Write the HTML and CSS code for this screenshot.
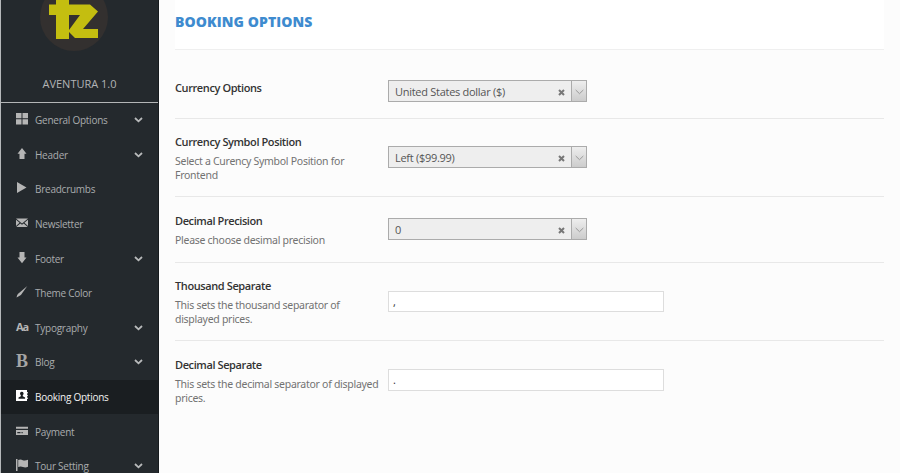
FILE: index.html
```
<!DOCTYPE html>
<html lang="en">
<head>
<meta charset="utf-8">
<title>Booking Options</title>
<link rel="stylesheet" href="styles.css">
</head>
<body>
<div class="app">
  <aside class="sidebar">
    <header class="brand">
      <svg class="logo" width="68" height="52" viewBox="0 0 68 52"><circle cx="34" cy="17" r="34" fill="#33302f"/><path fill-rule="evenodd" d="M9 4.500H16V0H29V4.500H50L58 11.500L43 29H58V38H35L29 32V39H16V15H9ZM29 15V30L40 15Z" fill="#c4be10"/></svg>
      <div class="version">AVENTURA 1.0</div>
    </header>
    <nav class="menu">
      <a class="item"><svg class="icon" viewBox="0 0 12 12"><path d="M0 0h5.500v5.300H0zM6.500 0H12v5.300H6.500zM0 6.300h5.500v5.200H0zM6.500 6.300H12v5.200H6.500z"/></svg><span>General Options</span><svg class="chevron" viewBox="0 0 9 6"><path d="M1 1l3.500 3.300L8 1"/></svg></a>
      <a class="item"><svg class="icon" viewBox="0 0 12 12"><path d="M6 0l4.500 5.800H8.500V11H3.500V5.800H1.500z"/></svg><span>Header</span><svg class="chevron" viewBox="0 0 9 6"><path d="M1 1l3.500 3.300L8 1"/></svg></a>
      <a class="item"><svg class="icon" viewBox="0 0 12 12"><path d="M1 0l9.500 5.500L1 11z"/></svg><span>Breadcrumbs</span></a>
      <a class="item"><svg class="icon" viewBox="0 0 12 12"><path d="M0 1.500h12L6 6.500zM0 2.800l3.600 3L0 9zM12 2.800v6.200L8.400 5.800zM.3 10l4-3.500L6 7.700l1.700-1.200 4 3.500z"/></svg><span>Newsletter</span></a>
      <a class="item"><svg class="icon" viewBox="0 0 12 12"><path d="M6 11.300l4.500-5.800h-2V0h-5v5.500h-2z"/></svg><span>Footer</span><svg class="chevron" viewBox="0 0 9 6"><path d="M1 1l3.500 3.300L8 1"/></svg></a>
      <a class="item"><svg class="icon" viewBox="0 0 12 12"><path d="M11.300 0L4.900 8.900 2.800 10.300 .5 11.500 1.200 9l1.200-1.600z"/></svg><span>Theme Color</span></a>
      <a class="item"><b class="icon glyph-aa">Aa</b><span>Typography</span><svg class="chevron" viewBox="0 0 9 6"><path d="M1 1l3.500 3.300L8 1"/></svg></a>
      <a class="item"><b class="icon glyph-b">B</b><span>Blog</span><svg class="chevron" viewBox="0 0 9 6"><path d="M1 1l3.500 3.300L8 1"/></svg></a>
      <a class="item active"><svg class="icon" viewBox="0 0 12 12"><path fill-rule="evenodd" d="M0 0h11v2h.8v1.500H11v1.300h.8v1.500H11v1.300h.8v1.500H11v2H0zM5.800 1.800a1.800 1.800 0 0 0-1 3.300v1.200L2.500 7.500v1.300h6.600V7.500L6.800 6.300V5.100a1.800 1.800 0 0 0-1-3.300z"/></svg><span>Booking Options</span></a>
      <a class="item"><svg class="icon" viewBox="0 0 12 12"><path fill-rule="evenodd" d="M0 1.700h12v2H0zM0 5h12v5H0zM1.300 7v1.200h3.200V7zM5.500 7v1.200h1.200V7z"/></svg><span>Payment</span></a>
      <a class="item"><svg class="icon" viewBox="0 0 12 12"><path d="M0 0h1.500v12H0zM2.200 1c2-1 3.300-.5 4.600.2S10 1.700 12 .8v7c-2 1-3.700.8-5 .2s-3-.9-4.800.1z"/></svg><span>Tour Setting</span><svg class="chevron" viewBox="0 0 9 6"><path d="M1 1l3.500 3.300L8 1"/></svg></a>
    </nav>
  </aside>
  <main class="content">
    <h1 class="title"><span>BOOKING OPTIONS</span></h1>
    <section class="field first">
      <div class="label"><h2>Currency Options</h2></div>
      <div class="select"><span>United States dollar ($)</span><svg class="clear" viewBox="0 0 7 7"><path d="M1 1l5 5M6 1L1 6"/></svg><i class="arrow"><svg viewBox="0 0 9 6"><path d="M.7 1l3.800 3.700L8.300 1"/></svg></i></div>
    </section>
    <section class="field position">
      <div class="label"><h2>Currency Symbol Position</h2><p>Select a Curency Symbol Position for<br>Frontend</p></div>
      <div class="select"><span>Left ($99.99)</span><svg class="clear" viewBox="0 0 7 7"><path d="M1 1l5 5M6 1L1 6"/></svg><i class="arrow"><svg viewBox="0 0 9 6"><path d="M.7 1l3.800 3.700L8.300 1"/></svg></i></div>
    </section>
    <section class="field precision">
      <div class="label"><h2>Decimal Precision</h2><p>Please choose desimal precision</p></div>
      <div class="select"><span>0</span><svg class="clear" viewBox="0 0 7 7"><path d="M1 1l5 5M6 1L1 6"/></svg><i class="arrow"><svg viewBox="0 0 9 6"><path d="M.7 1l3.800 3.700L8.300 1"/></svg></i></div>
    </section>
    <section class="field thousand">
      <div class="label"><h2>Thousand Separate</h2><p>This sets the thousand separator of<br>displayed prices.</p></div>
      <div class="input">,</div>
    </section>
    <section class="field decimal">
      <div class="label"><h2>Decimal Separate</h2><p>This sets the decimal separator of displayed<br>prices.</p></div>
      <div class="input">.</div>
    </section>
  </main>
</div>
</body>
</html>
```
FILE: styles.css
```
* { box-sizing: border-box; }
body { margin: 0; background: #fcfcfc; font-family: "Open Sans", sans-serif; overflow: hidden; }
.app { display: flex; width: 900px; height: 473px; overflow: hidden; }
.sidebar { flex: none; width: 159px; height: 473px; background: #24292d; border-left: 1px solid #b5b8ba; border-right: 1px solid #171b1e; overflow: hidden; }
.brand { height: 103px; border-bottom: 1px solid #b4b6b7; display: flex; flex-direction: column; align-items: center; }
.logo { display: block; margin-right: 12px; }
.version { margin-top: 24px; font-size: 11px; line-height: 16px; color: #b2b4b5; }
.item { display: flex; align-items: center; height: 34.6px; padding: 0 15px; font-size: 10px; letter-spacing: -0.25px; color: #a9acad; }
.icon { flex: none; width: 12px; height: 12px; margin: -2px 7px 0 0; fill: #b5b5b5; overflow: visible; }
.item span { flex: 1; white-space: nowrap; }
.chevron { width: 9px; height: 6px; fill: none; stroke: #b8babb; stroke-width: 1.8; }
.active { background: #1a1e21; color: #f2f2f2; }
.active .icon { fill: #fff; }
.glyph-aa { font: bold 11px/12px "Open Sans", sans-serif; letter-spacing: -1px; color: #b5b5b5; }
.glyph-b { font: bold 18px/12px "Liberation Serif", serif; color: #a5a5a5; }
.content { flex: 1; padding: 0 16px; }
.title { margin: 0; height: 50px; padding-top: 12px; background: #fff; border-bottom: 1px solid #efefef; font-size: 14px; line-height: 20px; font-weight: 800; letter-spacing: 0.1px; color: #3e8bcf; }
.field { display: flex; border-bottom: 1px solid #e8e8e8; }
.label { width: 213px; }
.label h2 { margin: 0; font: 600 11px/16px "Open Sans", sans-serif; letter-spacing: -0.4px; color: #333; white-space: nowrap; }
.label p { margin: 5px 0 0; font: 10.5px/13.5px "Noto Sans", sans-serif; letter-spacing: -0.28px; color: #727272; white-space: nowrap; }
.first { height: 69px; padding-top: 30px; }
.position { height: 78px; padding-top: 15px; }
.position .select { margin-top: 12px; }
.precision { height: 66px; padding-top: 16px; }
.precision .select { margin-top: 5px; }
.thousand { height: 78px; padding-top: 15px; }
.decimal { padding-top: 16px; border: 0; }
.select { display: flex; align-items: center; width: 199px; height: 22px; border: 1px solid #ababab; background: #eee; padding-left: 6px; font-size: 11px; letter-spacing: -0.28px; color: #555; }
.select span { flex: 1; }
.clear { width: 7px; height: 7px; margin: 2px 6px 0 0; stroke: #777; stroke-width: 2; }
.arrow { display: flex; align-items: center; justify-content: center; width: 15px; height: 20px; border-left: 1px solid #ababab; background: linear-gradient(#eee, #ccc); }
.arrow svg { width: 9px; height: 6px; margin-top: 2px; fill: none; stroke: #999; }
.input { width: 276px; height: 21px; margin-top: 13px; border: 1px solid #ddd; background: #fff; padding-left: 4px; font-size: 11px; line-height: 19px; color: #333; }
.decimal .input { height: 22px; margin-top: 12px; }
```
